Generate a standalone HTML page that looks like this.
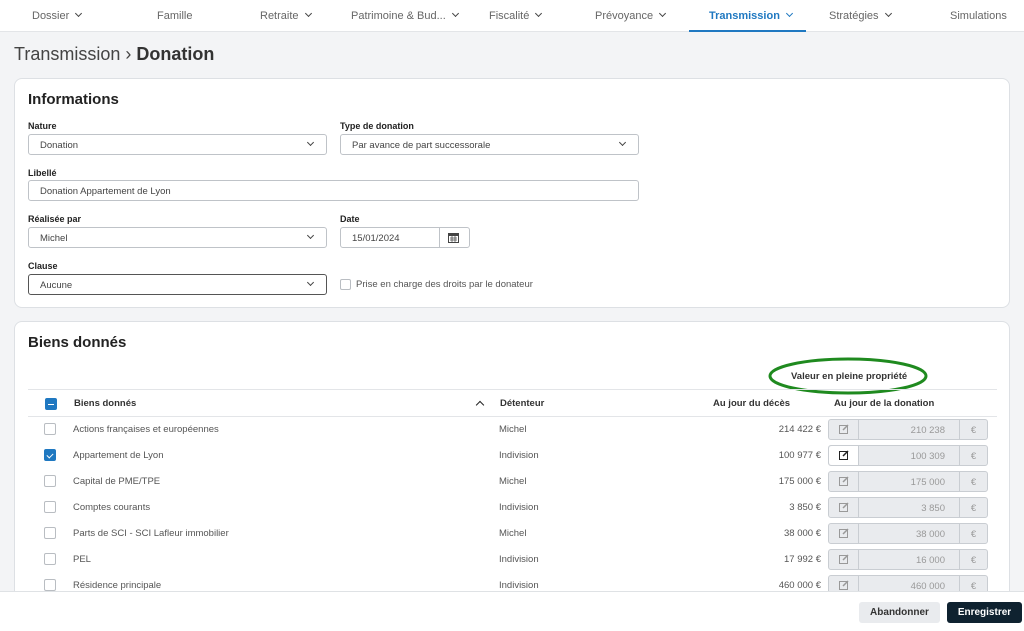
<!DOCTYPE html>
<html><head><meta charset="utf-8"><style>
*{box-sizing:border-box;margin:0;padding:0}
html,body{width:1024px;height:631px;overflow:hidden}
body{background:#f3f4f6;font-family:"Liberation Sans",sans-serif;color:#333;position:relative}
.nav{position:absolute;left:0;top:0;width:1024px;height:32px;background:#fff;border-bottom:1px solid #e3e5e8}
.nav span{position:absolute;top:10px;font-size:11px;color:#666;white-space:nowrap}
.nav span.act{color:#1f78c1;font-weight:bold}
.chev{display:inline-block;width:5px;height:5px;border-right:1.5px solid #444;border-bottom:1.5px solid #444;transform:rotate(45deg);margin-left:7px;position:relative;top:-3px}
.act .chev{border-color:#1f78c1}
.uline{position:absolute;left:689px;top:30px;width:117px;height:2px;background:#1f78c1}
h1{position:absolute;left:14px;top:44px;font-size:18px;font-weight:normal;color:#444;white-space:nowrap}
h1 b{color:#333}
.card{position:absolute;left:14px;width:996px;background:#fff;border:1px solid #dde0e4;border-radius:8px}
h2{position:absolute;left:13px;font-size:15px;font-weight:bold;color:#222}
.lbl{position:absolute;font-size:9px;font-weight:bold;color:#222;white-space:nowrap}
.sel{position:absolute;height:21px;border:1px solid #bfc3c8;border-radius:3px;font-size:9.5px;color:#444;padding:5px 11px;background:#fff;white-space:nowrap}
.sel .c{position:absolute;right:13px;top:5px;width:5px;height:5px;border-right:1.3px solid #444;border-bottom:1.3px solid #444;transform:rotate(45deg)}
.cb{position:absolute;width:12px;height:12px;border:1px solid #b9bdc2;border-radius:2px;background:#fff}
.cb.on{background:#1f78c1;border-color:#1f78c1}
.t{position:absolute;font-size:9.5px;color:#555;white-space:nowrap}
.th{position:absolute;font-size:9.5px;font-weight:bold;color:#333;white-space:nowrap}
.ig{position:absolute;left:814px;width:160px;height:21px;border:1px solid #c9cdd2;border-radius:3px;background:#e9ebee;font-size:9.5px;color:#999}
.ig .e{position:absolute;left:0;top:0;width:30px;height:19px;border-right:1px solid #c9cdd2}
.ig .v{position:absolute;right:42px;top:5px}
.ig .eu{position:absolute;left:130px;top:0;width:28px;height:19px;border-left:1px solid #c9cdd2;text-align:center;padding-top:5px}
.footer{position:absolute;left:0;top:591px;width:1024px;height:40px;background:#fff;border-top:1px solid #dfe2e5}
.btn{position:absolute;top:10px;height:21px;border-radius:3px;font-size:10px;font-weight:bold;text-align:center;padding-top:5px}
</style></head><body>
<div class="nav">
<span style="left:32px">Dossier<i class="chev"></i></span>
<span style="left:157px">Famille</span>
<span style="left:260px">Retraite<i class="chev"></i></span>
<span style="left:351px">Patrimoine &amp; Bud...<i class="chev"></i></span>
<span style="left:489px">Fiscalité<i class="chev"></i></span>
<span style="left:595px">Prévoyance<i class="chev"></i></span>
<span class="act" style="left:709px">Transmission<i class="chev"></i></span>
<span style="left:829px">Stratégies<i class="chev"></i></span>
<span style="left:950px">Simulations</span>
<div class="uline"></div>
</div>
<h1>Transmission › <b>Donation</b></h1>

<div class="card" style="top:78px;height:230px">
<h2 style="top:12px">Informations</h2>
<div class="lbl" style="left:13px;top:42px">Nature</div>
<div class="lbl" style="left:325px;top:42px">Type de donation</div>
<div class="sel" style="left:13px;top:55px;width:299px">Donation<i class="c"></i></div>
<div class="sel" style="left:325px;top:55px;width:299px">Par avance de part successorale<i class="c"></i></div>
<div class="lbl" style="left:13px;top:89px">Libellé</div>
<div class="sel" style="left:13px;top:101px;width:611px">Donation Appartement de Lyon</div>
<div class="lbl" style="left:13px;top:135px">Réalisée par</div>
<div class="lbl" style="left:325px;top:135px">Date</div>
<div class="sel" style="left:13px;top:148px;width:299px">Michel<i class="c"></i></div>
<div class="sel" style="left:325px;top:148px;width:130px">15/01/2024<span style="position:absolute;left:98px;top:0;width:1px;height:19px;background:#bfc3c8"></span><svg style="position:absolute;left:107px;top:4px" width="11" height="11" viewBox="0 0 11 11"><rect x="0.5" y="1.5" width="10" height="9" fill="none" stroke="#444"/><rect x="0.5" y="1.5" width="10" height="2.5" fill="#444"/><path d="M2 6h7M2 8h7M4 4v6M7 4v6" stroke="#444" stroke-width=".7"/></svg></div>
<div class="lbl" style="left:13px;top:182px">Clause</div>
<div class="sel" style="left:13px;top:195px;width:299px;border-color:#555">Aucune<i class="c"></i></div>
<div class="cb" style="left:325px;top:200px;width:11px;height:11px"></div>
<div class="t" style="left:341px;top:200px">Prise en charge des droits par le donateur</div>
</div>

<div class="card" style="top:321px;height:300px">
<h2 style="top:12px">Biens donnés</h2>
<div class="th" style="left:776px;top:49px">Valeur en pleine propriété</div>
<svg style="position:absolute;left:753px;top:35px" width="160" height="38"><ellipse cx="80" cy="19" rx="78" ry="17" fill="none" stroke="#1f8a1f" stroke-width="3"/></svg>
<div style="position:absolute;left:13px;top:67px;width:969px;height:1px;background:#e3e5e8"></div>
<div style="position:absolute;left:13px;top:94px;width:969px;height:1px;background:#e3e5e8"></div>
<div class="cb on" style="left:30px;top:76px"><div style="position:absolute;left:2px;top:4.5px;width:6px;height:1.3px;background:#fff"></div></div>
<div class="th" style="left:59px;top:76px">Biens donnés</div>
<div style="position:absolute;left:462px;top:80px;width:6px;height:6px;border-left:1.5px solid #222;border-top:1.5px solid #222;transform:rotate(45deg)"></div>
<div class="th" style="left:485px;top:76px">Détenteur</div>
<div class="th" style="left:698px;top:76px">Au jour du décès</div>
<div class="th" style="left:819px;top:76px">Au jour de la donation</div>
</div>

<div style="position:absolute;left:0;top:0">
<div class="cb" style="left:44px;top:423px"></div><div class="t" style="left:73px;top:424px">Actions françaises et européennes</div><div class="t" style="left:499px;top:424px">Michel</div><div class="t" style="left:740px;top:424px;width:81px;text-align:right">214 422 €</div><div class="ig" style="top:419px;left:828px"><div class="e"><svg style="margin:4px 0 0 10px" width="10" height="10"><rect x=".5" y="1.5" width="8" height="8" fill="none" stroke="#999"/><path d="M4 6l5-5" stroke="#999" stroke-width="1.5"/></svg></div><span class="v">210 238</span><div class="eu">€</div></div>
<div class="cb on" style="left:44px;top:449px"><div style="position:absolute;left:3px;top:2px;width:4px;height:6px;border-right:1.3px solid #fff;border-bottom:1.3px solid #fff;transform:rotate(45deg)"></div></div><div class="t" style="left:73px;top:450px">Appartement de Lyon</div><div class="t" style="left:499px;top:450px">Indivision</div><div class="t" style="left:740px;top:450px;width:81px;text-align:right">100 977 €</div><div class="ig" style="top:445px;left:828px"><div class="e" style="background:#fff;border-radius:3px 0 0 3px"><svg style="margin:4px 0 0 10px" width="10" height="10"><rect x=".5" y="1.5" width="8" height="8" fill="none" stroke="#222"/><path d="M4 6l5-5" stroke="#222" stroke-width="1.5"/></svg></div><span class="v">100 309</span><div class="eu">€</div></div>
<div class="cb" style="left:44px;top:475px"></div><div class="t" style="left:73px;top:476px">Capital de PME/TPE</div><div class="t" style="left:499px;top:476px">Michel</div><div class="t" style="left:740px;top:476px;width:81px;text-align:right">175 000 €</div><div class="ig" style="top:471px;left:828px"><div class="e"><svg style="margin:4px 0 0 10px" width="10" height="10"><rect x=".5" y="1.5" width="8" height="8" fill="none" stroke="#999"/><path d="M4 6l5-5" stroke="#999" stroke-width="1.5"/></svg></div><span class="v">175 000</span><div class="eu">€</div></div>
<div class="cb" style="left:44px;top:501px"></div><div class="t" style="left:73px;top:502px">Comptes courants</div><div class="t" style="left:499px;top:502px">Indivision</div><div class="t" style="left:740px;top:502px;width:81px;text-align:right">3 850 €</div><div class="ig" style="top:497px;left:828px"><div class="e"><svg style="margin:4px 0 0 10px" width="10" height="10"><rect x=".5" y="1.5" width="8" height="8" fill="none" stroke="#999"/><path d="M4 6l5-5" stroke="#999" stroke-width="1.5"/></svg></div><span class="v">3 850</span><div class="eu">€</div></div>
<div class="cb" style="left:44px;top:527px"></div><div class="t" style="left:73px;top:528px">Parts de SCI - SCI Lafleur immobilier</div><div class="t" style="left:499px;top:528px">Michel</div><div class="t" style="left:740px;top:528px;width:81px;text-align:right">38 000 €</div><div class="ig" style="top:523px;left:828px"><div class="e"><svg style="margin:4px 0 0 10px" width="10" height="10"><rect x=".5" y="1.5" width="8" height="8" fill="none" stroke="#999"/><path d="M4 6l5-5" stroke="#999" stroke-width="1.5"/></svg></div><span class="v">38 000</span><div class="eu">€</div></div>
<div class="cb" style="left:44px;top:553px"></div><div class="t" style="left:73px;top:554px">PEL</div><div class="t" style="left:499px;top:554px">Indivision</div><div class="t" style="left:740px;top:554px;width:81px;text-align:right">17 992 €</div><div class="ig" style="top:549px;left:828px"><div class="e"><svg style="margin:4px 0 0 10px" width="10" height="10"><rect x=".5" y="1.5" width="8" height="8" fill="none" stroke="#999"/><path d="M4 6l5-5" stroke="#999" stroke-width="1.5"/></svg></div><span class="v">16 000</span><div class="eu">€</div></div>
<div class="cb" style="left:44px;top:579px"></div><div class="t" style="left:73px;top:580px">Résidence principale</div><div class="t" style="left:499px;top:580px">Indivision</div><div class="t" style="left:740px;top:580px;width:81px;text-align:right">460 000 €</div><div class="ig" style="top:575px;left:828px"><div class="e"><svg style="margin:4px 0 0 10px" width="10" height="10"><rect x=".5" y="1.5" width="8" height="8" fill="none" stroke="#999"/><path d="M4 6l5-5" stroke="#999" stroke-width="1.5"/></svg></div><span class="v">460 000</span><div class="eu">€</div></div>
</div>

<div class="footer">
<div class="btn" style="left:859px;width:81px;background:#e9ebee;color:#333">Abandonner</div>
<div class="btn" style="left:947px;width:75px;background:#0f2230;color:#fff">Enregistrer</div>
</div>
</body></html>
